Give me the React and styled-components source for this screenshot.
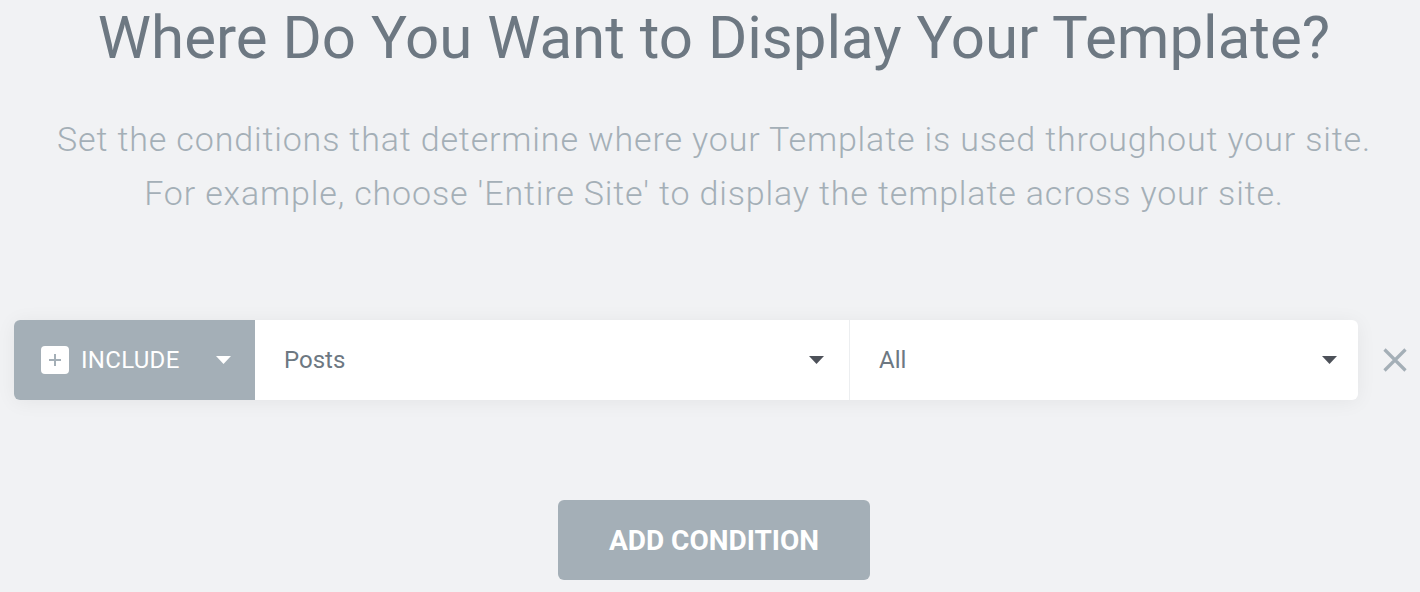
import React from 'react';
import styled, { createGlobalStyle } from 'styled-components';

const GlobalStyle = createGlobalStyle`
  html, body {
    margin: 0;
    padding: 0;
    background: #f1f2f4;
    font-family: Roboto, "Liberation Sans", Arial, sans-serif;
    overflow: hidden;
  }
`

const Page = styled.div`
  width: 1400px;
  padding-left: 14px;
  height: 592px;
  display: flex;
  flex-direction: column;
  align-items: center;
`

const Title = styled.h1`
  margin: 2px 0 0;
  font-size: 60px;
  line-height: 72px;
  font-weight: 400;
  color: #6d7882;
  text-align: center;
  white-space: nowrap;
`

const Message = styled.p`
  margin: 38px 0 0;
  font-size: 34px;
  line-height: 54px;
  font-weight: 300;
  letter-spacing: 0.85px;
  color: #a4afb7;
  text-align: center;
  white-space: nowrap;
`

const Row = styled.div`
  align-self: stretch;
  margin-top: 100px;
  display: flex;
  align-items: center;
`

const Card = styled.div`
  width: 1344px;
  height: 80px;
  display: flex;
  background: #fff;
  border-radius: 6px;
  box-shadow: 0 2px 20px rgba(0, 0, 0, 0.06);
  overflow: hidden;
`

const TypeSelect = styled.div`
  width: 241px;
  flex: none;
  display: flex;
  align-items: center;
  padding: 0 24px 0 27px;
  box-sizing: border-box;
  background: #a4afb7;
  color: #fff;
  font-size: 24px;
  font-weight: 400;
  letter-spacing: 0.3px;
  text-transform: uppercase;
`

const PlusBox = styled.span`
  width: 28px;
  height: 28px;
  border-radius: 4px;
  background: #fff;
  display: flex;
  align-items: center;
  justify-content: center;
  margin-right: 12px;
`

const Field = styled.div`
  width: ${({ w }) => w}px;
  flex: none;
  display: flex;
  align-items: center;
  padding: 0 ${({ pr }) => pr}px 0 29px;
  box-sizing: border-box;
  font-size: 24px;
  color: #6d7882;
  & + & {
    border-left: 1px solid #eceef0;
  }
`

const Label = styled.span`
  flex: 1;
`

const Remove = styled.button`
  margin-left: 25px;
  padding: 0;
  border: 0;
  background: none;
  width: 24px;
  height: 24px;
  display: flex;
`

const AddButton = styled.button`
  margin-top: 100px;
  width: 312px;
  height: 80px;
  border: 0;
  border-radius: 6px;
  background: #a4afb7;
  color: #fff;
  font-family: Roboto, "Liberation Sans", Arial, sans-serif;
  font-size: 28px;
  font-weight: 700;
  text-transform: uppercase;
`

const Caret = ({ color }) => (
  <svg width="15" height="8" viewBox="0 0 15 8">
    <path d="M0 0 H15 L7.5 8 Z" fill={color} />
  </svg>
)

const App = () => {
  return (
    <>
      <GlobalStyle />
      <Page>
        <Title>Where Do You Want to Display Your Template?</Title>
        <Message>
          Set the conditions that determine where your Template is used throughout your site.
          <br />
          For example, choose 'Entire Site' to display the template across your site.
        </Message>
        <Row>
          <Card>
            <TypeSelect>
              <PlusBox>
                <svg width="14" height="14" viewBox="0 0 14 14">
                  <path d="M7 1 V13 M1 7 H13" stroke="#a4afb7" strokeWidth="2" />
                </svg>
              </PlusBox>
              <Label>Include</Label>
              <Caret color="#fff" />
            </TypeSelect>
            <Field w={594} pr={25}>
              <Label>Posts</Label>
              <Caret color="#4d5159" />
            </Field>
            <Field w={509} pr={21}>
              <Label>All</Label>
              <Caret color="#4d5159" />
            </Field>
          </Card>
          <Remove>
            <svg width="24" height="24" viewBox="0 0 24 24">
              <path d="M1.5 1.5 L22.5 22.5 M22.5 1.5 L1.5 22.5" stroke="#a4afb7" strokeWidth="3.2" />
            </svg>
          </Remove>
        </Row>
        <AddButton>Add Condition</AddButton>
      </Page>
    </>
  )
}

export default App;
